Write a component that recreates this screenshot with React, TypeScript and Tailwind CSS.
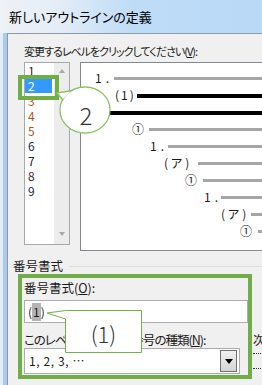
import React from "react";

const levels = ["1", "2", "3", "4", "5", "6", "7", "8", "9"];
const levelColor: Record<string, string> = {
  "1": "text-[#1e2440]",
  "2": "text-white",
  "3": "text-[#a85a1e]",
  "4": "text-[#a85a1e]",
  "5": "text-[#a85a1e]",
  "6": "text-[#1e2440]",
  "7": "text-[#1e2440]",
  "8": "text-[#3a2a30]",
  "9": "text-[#1e2440]",
};

type Row = { pl: string; lw: string; label: string; bar: string; track?: string };

const rows: Row[] = [
  { pl: "pl-[14px]", lw: "w-[19px]", label: "1.", bar: "h-[3px] bg-[#a6a6a6]", track: "tracking-[4px]" },
  { pl: "pl-[34px]", lw: "w-[22px]", label: "(1)", bar: "h-[4px] bg-black", track: "tracking-[2px]" },
  { pl: "pl-[19px]", lw: "w-0", label: "", bar: "h-[4px] bg-black" },
  { pl: "pl-[51px]", lw: "w-[17px]", label: "①", bar: "h-[3px] bg-[#a6a6a6]" },
  { pl: "pl-[69px]", lw: "w-[18px]", label: "1.", bar: "h-[3px] bg-[#a6a6a6]", track: "tracking-[4px]" },
  { pl: "pl-[83px]", lw: "w-[34px]", label: "(ア)", bar: "h-[3px] bg-[#a6a6a6]", track: "tracking-[3px]" },
  { pl: "pl-[104px]", lw: "w-[18px]", label: "①", bar: "h-[3px] bg-[#a6a6a6]" },
  { pl: "pl-[123px]", lw: "w-[17px]", label: "1.", bar: "h-[3px] bg-[#a6a6a6]", track: "tracking-[4px]" },
  { pl: "pl-[140px]", lw: "w-[30px]", label: "(ア)", bar: "h-[3px] bg-[#a6a6a6]", track: "tracking-[3px]" },
  { pl: "pl-[159px]", lw: "w-[18px]", label: "①", bar: "h-[3px] bg-[#a6a6a6]" },
];

export default function App() {
  return (
    <div className="relative w-[262px] h-[385px] overflow-hidden bg-white font-['Noto_Sans_CJK_JP','Noto_Sans',sans-serif] [font-feature-settings:'palt'] text-[#1a1a1a]">
      {/* title bar */}
      <div className="h-[33px] flex items-center pl-[9px] bg-[linear-gradient(to_right,#eef1f5_0%,#e4edf7_22%,#bfdcf7_50%,#b9d9f7_100%)] text-[13px] text-black">
        新しいアウトラインの定義
      </div>
      <div className="flex h-[352px]">
        <div className="w-[7px] border-l-[3px] border-[#e3edf7] bg-[#abc9e9]" />
        <div className="flex-1 flex flex-col bg-[#f0f0f0] border-l border-t border-[#8d99a6] min-w-0">
          <div className="mt-[9px] ml-[16px] text-[11px] leading-[16px] tracking-[-1px] whitespace-nowrap">
            変更するレベルをクリックしてください(<span className="underline">V</span>):
          </div>
          <div className="mt-[3px] flex items-start">
            {/* list box */}
            <div className="ml-[16px] w-[46px] h-[183px] shrink-0 border border-[#a5a9b0] bg-white flex">
              <div className="flex-1 flex flex-col pr-[2px]">
                {levels.map((l) => (
                  <div
                    key={l}
                    className={`h-[15px] leading-[15px] text-[12px] pl-[3px] ${levelColor[l]} ${l === "2" ? "bg-[#3399ff]" : ""}`}
                  >
                    {l}
                  </div>
                ))}
              </div>
              <div className="w-[15px] bg-[#ececec] flex flex-col items-center justify-between pt-[6px] pb-[8px]">
                <svg width="6" height="4" viewBox="0 0 6 4">
                  <polygon points="0,4 3,0 6,4" fill="#a8a8a8" />
                </svg>
                <svg width="6" height="4" viewBox="0 0 6 4">
                  <polygon points="0,0 6,0 3,4" fill="#a8a8a8" />
                </svg>
              </div>
            </div>
            {/* preview pane */}
            <div className="ml-[10px] w-[200px] h-[189px] shrink-0 border border-[#828790] bg-white pt-[7px] flex flex-col">
              {rows.map((r, i) => (
                <div key={i} className={`flex items-center h-[17px] ${r.pl}`}>
                  <div className={`${r.lw} shrink-0 text-[12px] leading-none -translate-y-px whitespace-nowrap ${r.track ?? ""}`}>
                    {r.label}
                  </div>
                  <div className={`flex-1 ${r.bar}`} />
                </div>
              ))}
            </div>
          </div>
          {/* 番号書式 group header */}
          <div className="mt-[7px] flex items-center h-[16px]">
            <div className="ml-[5px] text-[12.5px] leading-[16px] whitespace-nowrap">番号書式</div>
            <div className="ml-[6px] flex-1 h-px bg-[#d5dfe5]" />
          </div>
          <div className="flex items-start">
            <div className="ml-[10px] w-[234px] h-[105px] shrink-0 border-4 border-[#70ad47] flex flex-col">
              <div className="mt-[2px] ml-[2px] text-[12.5px] leading-[16px] whitespace-nowrap">
                番号書式(<span className="underline">O</span>):
              </div>
              <div className="mt-[4px] ml-[2px] h-[23px] border border-[#abadb3] bg-white flex items-center pl-[3px] text-[12px]">
                <span>(</span>
                <span className="bg-[#b4b4b4] px-[1px]">1</span>
                <span>)</span>
              </div>
              <div className="mt-[9px] ml-[2px] text-[12.5px] leading-[16px] tracking-[-1px] whitespace-nowrap">
                このレベルで使用する番号の種類(<span className="underline">N</span>):
              </div>
              <div className="ml-[2px] mr-[8px] h-[26px] border border-[#acacac] bg-white flex items-center justify-between pl-[4px] pr-[2px] text-[12px]">
                <span className="tracking-[0.6px]">1, 2, 3, …</span>
                <div className="w-[17px] h-[22px] border border-[#707070] bg-[linear-gradient(#f2f2f2,#d4d4d4)] flex items-center justify-center">
                  <svg width="8" height="5" viewBox="0 0 8 5">
                    <polygon points="0,0 8,0 4,5" fill="#000" />
                  </svg>
                </div>
              </div>
            </div>
            <div className="ml-[1px] flex flex-col shrink-0">
              <div className="mt-[58px] text-[12px] leading-[16px] whitespace-nowrap">次の</div>
              <div className="mt-[5px] w-[30px] h-[16px] border-y border-dotted border-[#333]" />
            </div>
          </div>
        </div>
      </div>

      {/* annotation: green box around level 2 */}
      <div className="absolute left-[18px] top-[75px] w-[41px] h-[25px] border-4 border-[#70ad47]" />

      {/* callouts */}
      <svg className="absolute left-0 top-0 pointer-events-none" width="262" height="385" viewBox="0 0 262 385">
        <ellipse cx="85" cy="110" rx="25" ry="23" fill="#fff" stroke="#8cc063" strokeWidth="1.3" />
        <polygon points="63,100 57,93 72.5,90.5" fill="#fff" stroke="#8cc063" strokeWidth="1.3" />
        <ellipse cx="85" cy="110" rx="24.2" ry="22.2" fill="#fff" />
        <path d="M65.5,310.5 H141.5 V352.5 H65.5 V319 L47,313 L65.5,310.5 Z" fill="#fff" stroke="#76b04a" strokeWidth="1" />
      </svg>
      <div className="absolute left-[74px] top-[100px] w-[24px] h-[30px] text-center text-[24px] leading-[30px] font-light text-[#333]">
        2
      </div>
      <div className="absolute left-[66px] top-[318px] w-[75px] h-[30px] text-center text-[22px] leading-[30px] font-light text-[#333]">
        (1)
      </div>
    </div>
  );
}
